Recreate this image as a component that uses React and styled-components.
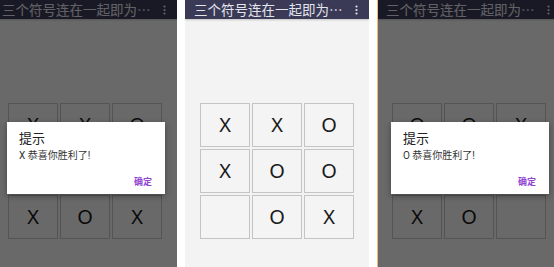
import styled, { createGlobalStyle } from "styled-components";

const GlobalStyle = createGlobalStyle`
  html, body {
    margin: 0;
    padding: 0;
    background: #ffffff;
  }
  body {
    font-family: Roboto, "Noto Sans CJK SC", "Noto Sans", sans-serif;
  }
`;

const screens = [
  {
    width: 177,
    shift: -7,
    board: ["X", "X", "O", "O", "X", "O", "X", "O", "X"],
    winner: "X",
  },
  {
    width: 184,
    shift: 0,
    board: ["X", "X", "O", "X", "O", "O", "", "O", "X"],
  },
  {
    width: 176,
    shift: -1,
    edge: true,
    board: ["O", "O", "X", "X", "O", "X", "X", "O", ""],
    winner: "O",
  },
];

const Kebab = () => (
  <svg width="3" height="10" viewBox="0 0 3 10">
    <circle cx="1.5" cy="1.5" r="1.1" fill="#e6e6ee" />
    <circle cx="1.5" cy="5" r="1.1" fill="#e6e6ee" />
    <circle cx="1.5" cy="8.5" r="1.1" fill="#e6e6ee" />
  </svg>
);

const Phone = ({ width, shift, edge, board, winner }) => (
  <Frame $width={width} $edge={edge}>
    <Screen $shift={shift}>
      <AppBar>
        <Title>三个符号连在一起即为…</Title>
        <Kebab />
      </AppBar>
      <Board>
        {board.map((mark, i) => (
          <Cell key={i}>{mark}</Cell>
        ))}
      </Board>
      {winner && (
        <>
          <Dim />
          <Dialog>
            <DialogTitle>提示</DialogTitle>
            <DialogMessage>{winner} 恭喜你胜利了!</DialogMessage>
            <DialogButton>确定</DialogButton>
          </Dialog>
        </>
      )}
    </Screen>
  </Frame>
);

export default function App() {
  return (
    <>
      <GlobalStyle />
      <Strip>
        {screens.map((s, i) => (
          <Phone key={i} {...s} />
        ))}
      </Strip>
    </>
  );
}

const Strip = styled.div`
  display: flex;
  gap: 8px;
  width: 554px;
  height: 267px;
  overflow: hidden;
  background: #ffffff;
`;

const Frame = styled.div`
  flex: none;
  width: ${(p) => p.$width}px;
  height: 267px;
  overflow: hidden;
  border-left: ${(p) => (p.$edge ? "1px solid #f2b878" : "none")};
`;

const Screen = styled.div`
  position: relative;
  width: 184px;
  height: 267px;
  margin-left: ${(p) => p.$shift}px;
  background: #f3f3f3;
  display: flex;
  flex-direction: column;
`;

const AppBar = styled.div`
  height: 19px;
  flex: none;
  background: #3a3a57;
  display: flex;
  align-items: center;
  justify-content: space-between;
  padding: 0 11px 0 9px;
  box-shadow: 0 1px 2px rgba(0, 0, 0, 0.2);
`;

const Title = styled.span`
  color: #e4e4ec;
  font-size: 13.5px;
  line-height: 19px;
  white-space: nowrap;
  font-family: "Noto Sans CJK SC", sans-serif;
`;

const Board = styled.div`
  margin: 84px 0 0 15px;
  display: grid;
  grid-template-columns: repeat(3, 50px);
  grid-template-rows: repeat(3, 44px);
  gap: 2px;
`;

const Cell = styled.div`
  box-sizing: border-box;
  border: 1px solid #c4c4c4;
  background: #f4f4f4;
  display: flex;
  align-items: center;
  justify-content: center;
  font-family: "Noto Sans", sans-serif;
  font-size: 20px;
  line-height: 1;
  color: #1a1a1a;
`;

const Dim = styled.div`
  position: absolute;
  inset: 0;
  background: rgba(0, 0, 0, 0.57);
`;

const Dialog = styled.div`
  position: absolute;
  top: 122px;
  left: 14px;
  width: 158px;
  height: 72px;
  box-sizing: border-box;
  padding: 8px 12px 6px;
  background: #ffffff;
  box-shadow: 0 2px 6px rgba(0, 0, 0, 0.35);
  display: flex;
  flex-direction: column;
  font-family: Roboto, "Noto Sans CJK SC", sans-serif;
`;

const DialogTitle = styled.div`
  font-size: 13px;
  line-height: 17px;
  color: #222222;
`;

const DialogMessage = styled.div`
  margin-top: 2px;
  font-size: 10px;
  line-height: 14px;
  color: #333333;
`;

const DialogButton = styled.div`
  margin-top: auto;
  align-self: flex-end;
  margin-right: 1px;
  font-size: 9px;
  line-height: 11px;
  font-weight: 700;
  color: #9146d4;
`;
